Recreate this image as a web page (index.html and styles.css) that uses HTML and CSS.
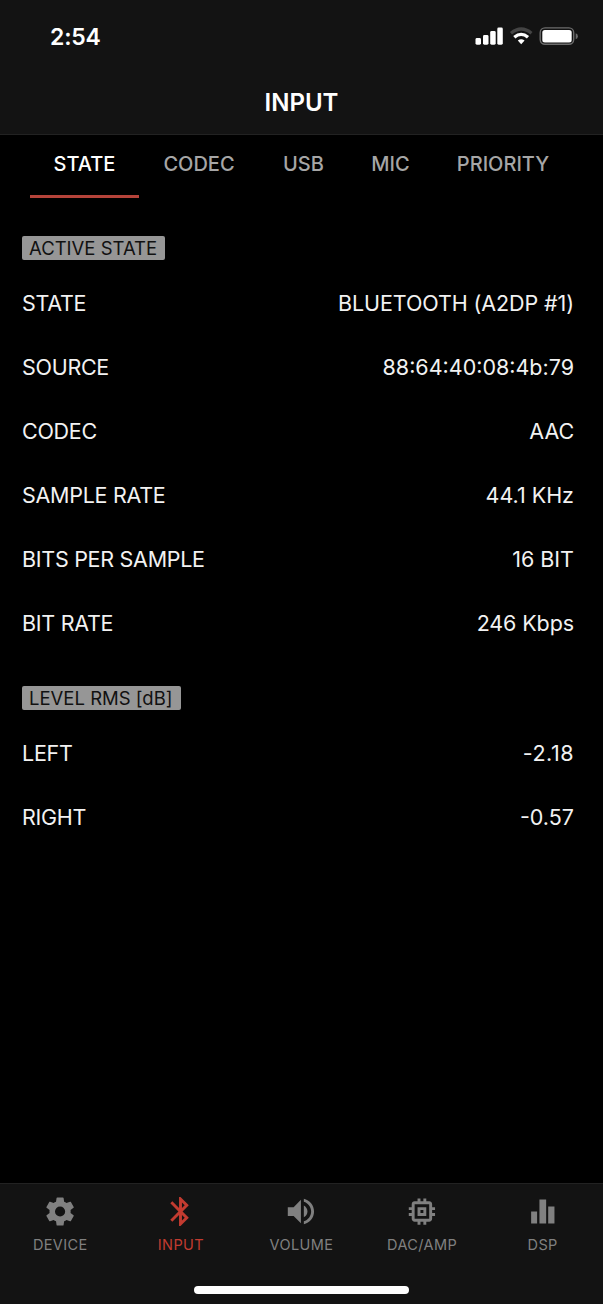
FILE: index.html
```html
<!DOCTYPE html>
<html lang="en">
<head>
    <meta charset="UTF-8">
    <meta name="viewport" content="width=device-width, initial-scale=1.0">
    <title>Input</title>
    <link rel="stylesheet" href="styles.css">
</head>
<body>
    <header class="header">
        <div class="status-bar">
            <span class="time">2:54</span>
            <svg class="status-icons" width="104" height="20" viewBox="0 0 104 20">
                <!-- signal -->
                <g fill="#fff">
                    <rect x="0.5" y="11" width="5.5" height="6.7" rx="1.4"/>
                    <rect x="8" y="8" width="5.5" height="9.7" rx="1.4"/>
                    <rect x="15.2" y="4" width="5.5" height="13.7" rx="1.4"/>
                    <rect x="22.3" y="0.5" width="5.5" height="17.2" rx="1.4"/>
                </g>
                <!-- wifi -->
                <g fill="none" stroke-width="3.3">
                    <path d="M36 6.2Q46.200 -2.200 56.500 6.200" stroke="#444"/>
                    <path d="M39.300 10.300Q46.200 4.400 53 10.300" stroke="#fff"/>
                </g>
                <path d="M42.800 13.600Q46.200 10.900 49.600 13.600L46.200 17.200Z" fill="#fff"/>
                <!-- battery -->
                <rect x="65.200" y="0.900" width="33.500" height="16.400" rx="4.800" fill="none" stroke="#6c6c6c" stroke-width="1.400"/>
                <rect x="67.300" y="3" width="29.400" height="12.400" rx="2.500" fill="#fff"/>
                <path d="M100.700 6.200Q102.900 6.800 102.900 9.200T100.700 12.200Z" fill="#6c6c6c"/>
            </svg>
        </div>
        <h1 class="title">INPUT</h1>
    </header>

    <nav class="tabs">
        <a class="tab tab-state active">STATE</a>
        <a class="tab tab-codec">CODEC</a>
        <a class="tab tab-usb">USB</a>
        <a class="tab tab-mic">MIC</a>
        <a class="tab tab-priority">PRIORITY</a>
    </nav>

    <main class="content">
        <section class="group">
            <h2 class="badge">ACTIVE STATE</h2>
            <div class="row"><span class="label">STATE</span><span class="value">BLUETOOTH (A2DP #1)</span></div>
            <div class="row"><span class="label">SOURCE</span><span>88:64:40:08:4b:79</span></div>
            <div class="row"><span class="label">CODEC</span><span class="value">AAC</span></div>
            <div class="row"><span class="label">SAMPLE RATE</span><span>44.1 KHz</span></div>
            <div class="row"><span class="label">BITS PER SAMPLE</span><span>16 BIT</span></div>
            <div class="row"><span class="label">BIT RATE</span><span class="value">246 Kbps</span></div>
        </section>
        <section class="group">
            <h2 class="badge">LEVEL RMS [dB]</h2>
            <div class="row"><span class="label">LEFT</span><span class="level">-2.18</span></div>
            <div class="row"><span class="label">RIGHT</span><span>-0.57</span></div>
        </section>
    </main>

    <footer class="footer">
        <nav class="bottom-nav">
            <a class="nav-item">
                <svg class="icon" viewBox="-0.1 -0.4 24.8 24.8"><path d="M19.430 12.980c.04-.32.07-.64.07-.98s-.03-.66-.07-.98l2.110-1.650c.19-.15.24-.42.12-.64l-2-3.460c-.12-.22-.39-.3-.61-.22l-2.490 1c-.52-.4-1.080-.73-1.690-.98l-.38-2.650C14.460 2.180 14.250 2 14 2h-4c-.25 0-.46.18-.49.42l-.38 2.650c-.61.25-1.170.59-1.690.98l-2.490-1c-.23-.09-.49 0-.61.22l-2 3.460c-.13.22-.07.49.12.64l2.110 1.650c-.04.32-.07.65-.07.98s.03.66.07.98l-2.110 1.650c-.19.15-.24.42-.12.64l2 3.460c.12.22.39.3.61.22l2.490-1c.52.4 1.080.73 1.690.98l.38 2.650c.03.24.24.42.49.42h4c.25 0 .46-.18.49-.42l.38-2.650c.61-.25 1.170-.59 1.690-.98l2.490 1c.23.09.49 0 .61-.22l2-3.460c.12-.22.07-.49-.12-.64l-2.110-1.650zM12 15.600a3.600 3.600 0 1 1 0-7.200 3.600 3.600 0 0 1 0 7.200z"/></svg>
                <span>DEVICE</span>
            </a>
            <a class="nav-item active">
                <svg class="icon" viewBox="0 0 24 24"><path d="M17.710 7.710L12 2h-1v7.590L6.410 5 5 6.410 10.590 12 5 17.590 6.410 19 11 14.410V22h1l5.710-5.710-4.300-4.290 4.300-4.290zM13 5.830l1.880 1.880L13 9.590V5.830zm1.880 10.460L13 18.170v-3.760l1.880 1.880z"/></svg>
                <span>INPUT</span>
            </a>
            <a class="nav-item">
                <svg class="icon" viewBox="0.4 0 24 24"><path d="M3 9v6h4l5 5V4L7 9H3zm13.500 3c0-1.770-1.020-3.290-2.500-4.030v8.050c1.480-.73 2.500-2.250 2.500-4.020zM14 3.230v2.060c2.890.86 5 3.540 5 6.710s-2.110 5.850-5 6.710v2.060c4.010-.91 7-4.490 7-8.770s-2.990-7.860-7-8.770z"/></svg>
                <span>VOLUME</span>
            </a>
            <a class="nav-item">
                <svg class="icon" viewBox="0.4 0 24 24"><path d="M15 9H9v6h6V9zm-2 4h-2v-2h2v2zm8-2V9h-2V7c0-1.100-.9-2-2-2h-2V3h-2v2h-2V3H9v2H7c-1.100 0-2 .9-2 2v2H3v2h2v2H3v2h2v2c0 1.100.9 2 2 2h2v2h2v-2h2v2h2v-2h2c1.100 0 2-.9 2-2v-2h2v-2h-2v-2h2zm-4 6H7V7h10v10z"/></svg>
                <span>DAC/AMP</span>
            </a>
            <a class="nav-item">
                <svg class="icon" viewBox="0 0 24 24"><path d="M4.200 12h4.100v8.200H4.200zM9.900 3.800h4.600v16.400H9.900zM15.900 8.600h4.300v11.600h-4.300z"/></svg>
                <span>DSP</span>
            </a>
        </nav>
        <div class="home-indicator"></div>
    </footer>
</body>
</html>
```

FILE: styles.css
```css
* {
    box-sizing: border-box;
    margin: 0;
}
body {
    display: flex;
    flex-direction: column;
    height: 1304px;
    background: #000;
    color: #f2f2f2;
    font-family: 'Inter', sans-serif;
    overflow: hidden;
}
.header {
    height: 135px;
    background: #131313;
    border-bottom: 1px solid #222;
}
.status-bar {
    display: flex;
    justify-content: space-between;
    align-items: center;
    height: 74px;
    padding: 0 24px 0 50px;
}
.time {
    font-size: 23px;
    font-weight: 600;
    letter-spacing: -0.2px;
    color: #fff;
}
.title {
    color: #fff;
    font-size: 24px;
    font-weight: 600;
    line-height: 58px;
    text-align: center;
}
.tabs {
    display: flex;
    height: 63px;
    padding: 0 30px;
}
.tab {
    color: #a6a6a6;
    font-size: 20px;
    font-weight: 500;
    line-height: 59px;
    text-align: center;
    border-bottom: 3px solid transparent;
}
.tab.active {
    color: #fff;
    border-color: #b5433a;
}
.tab-state { width: 109px; }
.tab-codec { width: 120px; }
.tab-usb { width: 89px; }
.tab-mic { width: 85px; }
.tab-priority { width: 140px; }
.content {
    flex: 1;
    padding: 38px 29px 0 22px;
}
.group {
    margin-bottom: 31px;
}
.badge {
    width: max-content;
    height: 24px;
    padding: 0 8px 0 7px;
    margin-bottom: 11px;
    border-radius: 2px;
    background: #969696;
    color: #111;
    font-size: 18.500px;
    font-weight: 400;
    line-height: 25px;
}
.row {
    display: flex;
    justify-content: space-between;
    align-items: center;
    height: 64px;
    font-size: 21.500px;
}
.label {
    letter-spacing: -0.28px;
}
.value {
    letter-spacing: -0.1px;
}
.level {
    letter-spacing: 0.5px;
}
.footer {
    height: 121px;
    padding-top: 10px;
    background: #131313;
    border-top: 1px solid #222;
}
.bottom-nav {
    display: flex;
    height: 92px;
}
.nav-item {
    flex: 1;
    display: flex;
    flex-direction: column;
    align-items: center;
    color: #808080;
    font-size: 14.500px;
    line-height: 18px;
    letter-spacing: 0.4px;
}
.nav-item.active {
    color: #c23b30;
}
.icon {
    width: 35px;
    height: 35px;
    margin-bottom: 7px;
    fill: currentColor;
}
.home-indicator {
    width: 215px;
    height: 8px;
    margin: 0 auto;
    border-radius: 4px;
    background: #fff;
}
```
